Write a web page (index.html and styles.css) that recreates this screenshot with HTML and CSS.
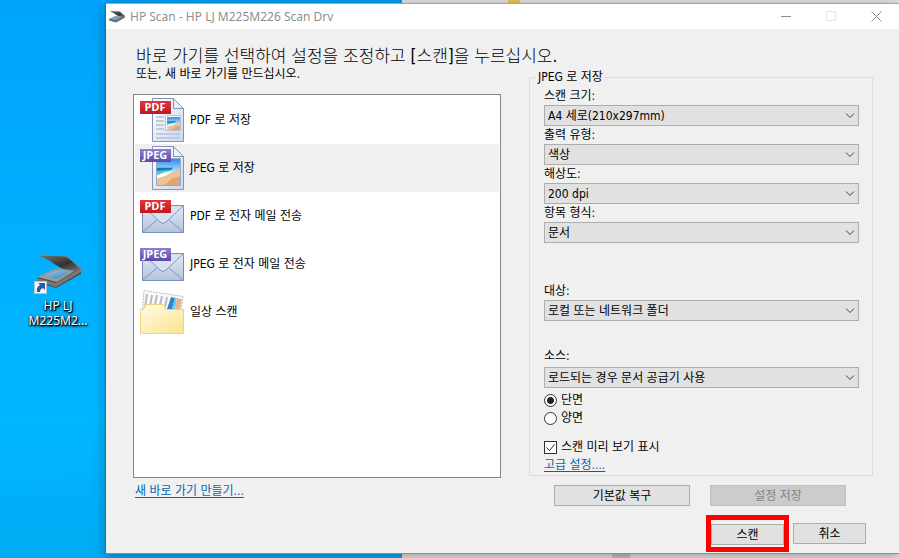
FILE: index.html
```html
<!DOCTYPE html>
<html lang="ko">
<head>
<meta charset="utf-8">
<meta name="viewport" content="width=device-width, initial-scale=1">
<title>HP Scan</title>
<link rel="stylesheet" href="styles.css">
</head>
<body>
<svg class="defs" aria-hidden="true">
  <defs>
    <linearGradient id="red" x1="0" y1="0" x2="0" y2="1"><stop offset="0" stop-color="#e8343a"/><stop offset="1" stop-color="#b91a20"/></linearGradient>
    <linearGradient id="violet" x1="0" y1="0" x2="0" y2="1"><stop offset="0" stop-color="#8f7ed2"/><stop offset="1" stop-color="#5b48a8"/></linearGradient>
    <linearGradient id="paper" x1="0" y1="0" x2="1" y2="1"><stop offset="0" stop-color="#ffffff"/><stop offset="1" stop-color="#c9d8f2"/></linearGradient>
    <linearGradient id="mail" x1="0" y1="0" x2="0" y2="1"><stop offset="0" stop-color="#e3ebf5"/><stop offset="1" stop-color="#b3c2de"/></linearGradient>
    <linearGradient id="folder" x1="0" y1="0" x2="1" y2="1"><stop offset="0" stop-color="#fffbe6"/><stop offset="1" stop-color="#fde38d"/></linearGradient>
    <linearGradient id="sky" x1="0" y1="0" x2="0" y2="1"><stop offset="0" stop-color="#2f8fea"/><stop offset=".45" stop-color="#a4dcfa"/><stop offset="1" stop-color="#d9f1f8"/></linearGradient>
    <linearGradient id="lid" x1="0" y1="0" x2="1" y2="1"><stop offset="0" stop-color="#777"/><stop offset=".6" stop-color="#333"/><stop offset="1" stop-color="#777"/></linearGradient>
    <linearGradient id="glass" x1="0" y1="0" x2="1" y2="1"><stop offset="0" stop-color="#9fd0ee"/><stop offset="1" stop-color="#2f77b3"/></linearGradient>
    <symbol id="beach" viewBox="0 0 24 24" preserveAspectRatio="none">
      <path fill="url(#sky)" d="M0 0h24v24H0z"/>
      <path fill="#0d7fae" d="M0 8h17l-4 3-13 3z"/>
      <path fill="#5cc7cf" d="M0 11l14-1-5 4-9 3z"/>
      <path fill="#fff" d="M0 15l9-3 7-1-7 5-9 3z"/>
      <path fill="#eec294" d="M0 24v-6l10-3 14-6v15z"/>
      <path fill="#dca777" d="M8 24l8-6 8-2v8z"/>
    </symbol>
    <symbol id="sheet" viewBox="0 0 32 44">
      <path fill="url(#paper)" stroke="#8792bb" d="M.5.5h21l10 10v33H.5z"/>
      <path fill="#e8eefa" stroke="#8792bb" d="M21.500.5v10h10z"/>
    </symbol>
    <symbol id="envelope" viewBox="0 0 42 28">
      <path fill="url(#mail)" stroke="#7690b5" d="M.5.500h41v27H.5z"/>
      <path fill="none" stroke="#7f98bc" d="M1 27l15-13M41 27L26 14"/>
      <path fill="#d7e1ef" stroke="#7f98bc" d="M1 1l17 16q3 3 6 0L41 1"/>
    </symbol>
    <symbol id="scanner" viewBox="0 0 46 36">
      <path fill="#4b4b4b" d="M1 24l14-7 30-3v6L20 34 1 28z"/>
      <path fill="#999" d="M1 23l17-8 27-2-24 15z"/>
      <path fill="#777" d="M1 24l19 5 25-15v4L20 33 1 27z"/>
      <path fill="url(#glass)" d="M8 22l11-5 18-1-17 9z"/>
      <path fill="url(#lid)" d="M3 2q2-1 5-1l20 1q3 0 6 3l11 10-6 2-12-2q-8-4-13-8Q9 4 3 2z"/>
      <path fill="none" stroke="#888" d="M3 2q2-1 5-1l20 1q3 0 6 3l11 10"/>
    </symbol>
  </defs>
</svg>

<main class="desktop">
  <div class="back-window" aria-hidden="true"><span class="back-tabs"><i class="back-folder"></i></span><i class="back-thumb"></i></div>

  <a class="shortcut" href="#scan">
    <svg class="shortcut-icon" viewBox="0 0 48 42" aria-hidden="true">
      <use href="#scanner" x="2" y="0" width="46" height="36"/>
      <path fill="#f4f6f8" stroke="#b9c3cc" d="M.5 27.500h12v12H.5z"/>
      <path fill="#285ba6" d="M4 29h7v7l-2-2q-3 1-3 4H3q-1-5 3-7z"/>
    </svg>
    <span>HP LJ<br>M225M2...</span>
  </a>

  <section class="window" id="scan">
    <header class="titlebar">
      <svg class="app-icon" viewBox="0 0 46 36" aria-hidden="true"><use href="#scanner"/></svg>
      <span class="title">HP Scan - HP LJ M225M226 Scan Drv</span>
      <button class="caption" aria-label="최소화"><svg viewBox="0 0 11 11"><path d="M0 5.500h10"/></svg></button>
      <button class="caption" aria-label="최대화" disabled><svg viewBox="0 0 11 11"><path d="M.5.500h9v9h-9z"/></svg></button>
      <button class="caption" aria-label="닫기"><svg viewBox="0 0 11 11"><path d="M.5.500l10 10M10.500.5l-10 10"/></svg></button>
    </header>

    <div class="content">
      <h1>바로 가기를 선택하여 설정을 조정하고 <b>[</b>스캔<b>]</b>을 누르십시오.</h1>
      <div class="columns">
        <div class="left">
          <p class="sub">또는, 새 바로 가기를 만드십시오.</p>
          <ul class="list">
            <li><button class="row">
              <svg class="row-icon" viewBox="0 0 44 44" aria-hidden="true">
                <use href="#sheet" x="12" y="0" width="32" height="44"/>
                <path stroke="#c3cadb" stroke-width="2" d="M16 19h8M16 23h8M16 27h8M16 31h8M16 36h24M16 40h24"/>
                <path fill="#fff" stroke="#b6c1d6" d="M25.500 17.500h15v15h-15z"/>
                <use href="#beach" x="27" y="19" width="13" height="13"/>
                <path fill="url(#red)" d="M0 3h31v13H0z"/>
                <text class="tag" x="15" y="13">PDF</text>
              </svg><span>PDF 로 저장</span></button></li>
            <li><button class="row selected">
              <svg class="row-icon" viewBox="0 0 44 44" aria-hidden="true">
                <use href="#sheet" x="12" y="0" width="32" height="44"/>
                <path fill="#fff" stroke="#9ba9c8" d="M16.500 12.500h24v27h-24z"/>
                <use href="#beach" x="17" y="13" width="23" height="26"/>
                <path fill="#eef3fc" stroke="#8792bb" d="M33.500.5v10h10z"/>
                <path fill="url(#violet)" d="M0 3h31v13H0z"/>
                <text class="tag" x="15" y="13">JPEG</text>
              </svg><span>JPEG 로 저장</span></button></li>
            <li><button class="row">
              <svg class="row-icon" viewBox="0 0 44 44" aria-hidden="true">
                <use href="#envelope" x="2" y="11" width="42" height="28"/>
                <path fill="url(#red)" d="M0 6h31v13H0z"/>
                <text class="tag" x="15" y="16">PDF</text>
              </svg><span>PDF 로 전자 메일 전송</span></button></li>
            <li><button class="row">
              <svg class="row-icon" viewBox="0 0 44 44" aria-hidden="true">
                <use href="#envelope" x="2" y="11" width="42" height="28"/>
                <path fill="url(#violet)" d="M0 6h31v13H0z"/>
                <text class="tag" x="15" y="16">JPEG</text>
              </svg><span>JPEG 로 전자 메일 전송</span></button></li>
            <li><button class="row">
              <svg class="row-icon" viewBox="0 0 44 44" aria-hidden="true">
                <path fill="#fafafa" stroke="#bbb" stroke-dasharray="2 1" d="M4 .5l39 6-3 20H2z"/>
                <path stroke="#b9b9c0" stroke-width="2" d="M7 4L5 18M12 5l-2 12M17 5l-2 10M22 6l-2 9M27 7l-2 10"/>
                <path fill="#2c86c8" d="M31 7l4 1-3 11h-5z"/><path fill="#6fc7ec" d="M35 8h2l-2 11h-3z"/><path fill="#e9b68c" d="M37 8l5 1-2 10h-5z"/>
                <path fill="url(#folder)" stroke="#efd27c" d="M.5 43.500v-24h3l2-5h17q2 0 3 5h18v24z"/>
              </svg><span>일상 스캔</span></button></li>
          </ul>
          <a class="link" href="#new">새 바로 가기 만들기...</a>
        </div>

        <form class="right" onsubmit="return false">
          <fieldset>
            <legend>JPEG 로 저장</legend>
            <label class="label" for="size">스캔 크기:</label>
            <div class="combo"><select id="size"><option>A4 세로(210x297mm)</option></select><svg viewBox="0 0 10 6" aria-hidden="true"><path d="M1 .5l4 4 4-4"/></svg></div>
            <label class="label" for="output">출력 유형:</label>
            <div class="combo"><select id="output"><option>색상</option></select><svg viewBox="0 0 10 6" aria-hidden="true"><path d="M1 .5l4 4 4-4"/></svg></div>
            <label class="label" for="resolution">해상도:</label>
            <div class="combo"><select id="resolution"><option>200 dpi</option></select><svg viewBox="0 0 10 6" aria-hidden="true"><path d="M1 .5l4 4 4-4"/></svg></div>
            <label class="label" for="item">항목 형식:</label>
            <div class="combo"><select id="item"><option>문서</option></select><svg viewBox="0 0 10 6" aria-hidden="true"><path d="M1 .5l4 4 4-4"/></svg></div>
            <label class="label target" for="target">대상:</label>
            <div class="combo"><select id="target"><option>로컬 또는 네트워크 폴더</option></select><svg viewBox="0 0 10 6" aria-hidden="true"><path d="M1 .5l4 4 4-4"/></svg></div>
            <label class="label source" for="source">소스:</label>
            <div class="combo"><select id="source"><option>로드되는 경우 문서 공급기 사용</option></select><svg viewBox="0 0 10 6" aria-hidden="true"><path d="M1 .5l4 4 4-4"/></svg></div>
            <div class="sides">
              <label class="choice"><input type="radio" name="side" checked>단면</label>
              <label class="choice"><input type="radio" name="side">양면</label>
            </div>
            <label class="choice preview"><span class="check"><input type="checkbox" checked><svg viewBox="0 0 13 13" aria-hidden="true"><path d="M2.500 6.500l3 3 5-6"/></svg></span>스캔 미리 보기 표시</label>
            <a class="link" href="#advanced">고급 설정....</a>
          </fieldset>
          <div class="settings-actions">
            <button class="button" type="button">기본값 복구</button>
            <button class="button" type="button" disabled>설정 저장</button>
          </div>
          <div class="dialog-actions">
            <div class="highlight"><button class="button" type="submit">스캔</button></div>
            <button class="button" type="button">취소</button>
          </div>
        </form>
      </div>
    </div>
  </section>
</main>
</body>
</html>
```
FILE: styles.css
```css
* { box-sizing: border-box; }

body {
  margin: 0;
  font: 12px/16px "DejaVu Sans Condensed", "Noto Sans CJK KR", sans-serif;
  color: #000;
}

button, select, input { font: inherit; color: inherit; margin: 0; }
h1, p, ul { margin: 0; padding: 0; }
ul { list-style: none; }
svg { display: block; flex: none; }
.defs { position: absolute; width: 0; height: 0; }

.desktop {
  position: relative;
  min-height: 100vh;
  overflow: hidden;
  padding: 3px 0 4px 106px;
  background:
    linear-gradient(175deg, transparent 76%, rgba(0, 160, 235, .12) 77%),
    linear-gradient(#00a3fb, #00b4ff 60%, #00b6ff 75%, #00aef6);
}

/* Explorer window showing around the dialog */
.back-window {
  position: absolute;
  inset: 0 0 0 402px;
  display: flex;
  flex-direction: column;
  justify-content: space-between;
  background: #e6e6e6;
}
.back-tabs { display: flex; height: 3px; padding-left: 101px; }
.back-folder { width: 12px; margin-left: 5px; background: #ecc95a; }
.back-thumb { width: 18px; height: 4px; margin-left: 210px; background: #c4c4c4; }

.shortcut {
  position: absolute;
  left: 20px;
  top: 254px;
  width: 76px;
  display: flex;
  flex-direction: column;
  align-items: center;
  color: #fff;
  font: 12px/15px "Noto Sans", sans-serif;
  text-align: center;
  text-decoration: none;
  text-shadow: 1px 1px 1px #000, 0 1px 2px #000, 1px 1px 3px #000;
}
.shortcut-icon { width: 48px; height: 42px; margin-bottom: 2px; }

.window {
  position: relative;
  display: flex;
  flex-direction: column;
  min-height: calc(100vh - 7px);
  background: #f0f0f0;
  border-top: 1px solid #a2a5a8;
  border-bottom: 1px solid #8d9092;
  box-shadow: -1px 0 0 rgba(30, 100, 145, .6), 0 2px 12px rgba(0, 0, 0, .35);
}

.titlebar { display: flex; align-items: center; height: 25px; padding-left: 3px; background: #fff; }
.app-icon { width: 16px; height: 14px; }
.title { flex: 1; padding-left: 5px; font: 12px/16px "Noto Sans", sans-serif; color: #8f8f8f; }
.caption {
  display: grid;
  place-items: center;
  width: 45px;
  height: 25px;
  padding: 0;
  border: 0;
  background: none;
}
.caption svg { width: 11px; height: 11px; fill: none; stroke: #8c8c8c; }
.caption:disabled svg { stroke: #e3e3e3; }

.content { flex: 1; display: flex; flex-direction: column; padding: 16px 26px 1px 27px; }
h1 { padding-left: 3px; font-size: 17px; font-weight: 300; line-height: 22px; }
.columns { flex: 1; display: grid; grid-template-columns: minmax(0, 368fr) minmax(0, 344fr); gap: 28px; }

.left { display: flex; flex-direction: column; align-items: flex-start; padding-bottom: 53px; }
.sub { padding-left: 3px; line-height: 14px; }
.list {
  flex: 1;
  align-self: stretch;
  margin: 13px 0 5px;
  padding: 1px;
  border: 1px solid #828790;
  background: #fff;
}
.row {
  display: flex;
  align-items: center;
  gap: 6px;
  width: 100%;
  height: 48px;
  padding: 0 5px;
  border: 0;
  background: none;
  text-align: left;
}
.row.selected { background: #f0f0f0; }
.row-icon { width: 44px; height: 44px; }
.tag { font: 700 11px "Open Sans", sans-serif; fill: #fff; text-anchor: middle; }
.link { color: #0066b4; text-decoration: underline; text-underline-offset: 2px; }
.left .link { margin-left: 2px; }

.right { padding-top: 2px; }
fieldset { margin: 0; padding: 2px 13px 2px 14px; border: 1px solid #dcdcdc; min-width: 0; }
legend { margin-left: -8px; padding: 0 2px; }
.label { display: block; line-height: 18px; }
.label.target { margin-top: 39px; }
.label.source { margin: 26px 0 2px; }

.combo { display: grid; align-items: center; }
.combo select, .combo svg { grid-area: 1 / 1; }
.combo select {
  appearance: none;
  width: 100%;
  height: 21px;
  padding: 0 24px 0 3px;
  border: 1px solid #adadad;
  border-radius: 0;
  background: #e1e1e1;
}
.combo svg { justify-self: end; width: 10px; height: 6px; margin-right: 4px; fill: none; stroke: #404040; pointer-events: none; }

.sides { margin: 3px 0 11px; }
.choice { display: flex; align-items: center; gap: 4px; height: 18px; }
.choice.preview { margin-bottom: 1px; }
.choice input {
  appearance: none;
  width: 13px;
  height: 13px;
  border: 1px solid #333;
  background: #fff;
}
.choice input[type="radio"] { border-radius: 50%; }
.choice input[type="radio"]:checked { background: radial-gradient(circle, #222 3px, #fff 4px); }
.check { display: grid; }
.check input, .check svg { grid-area: 1 / 1; }
.check svg { width: 13px; height: 13px; fill: none; stroke: #222; visibility: hidden; pointer-events: none; }
.check input:checked + svg { visibility: visible; }

.button {
  height: 21px;
  padding: 0;
  border: 1px solid #adadad;
  background: #e1e1e1;
  line-height: 16px;
}
.button:disabled { border-color: #bfbfbf; background: #ccc; color: #838383; }
.settings-actions { display: flex; gap: 20px; margin-top: 9px; padding: 0 27px 0 25px; }
.settings-actions .button { flex: 1; }
.dialog-actions { display: flex; justify-content: flex-end; align-items: center; gap: 4px; margin-top: 9px; padding-right: 7px; }
.dialog-actions .button { width: 73px; }
.highlight { display: flex; padding: 4px 0 2px; border: 5px solid #f00; }
```
